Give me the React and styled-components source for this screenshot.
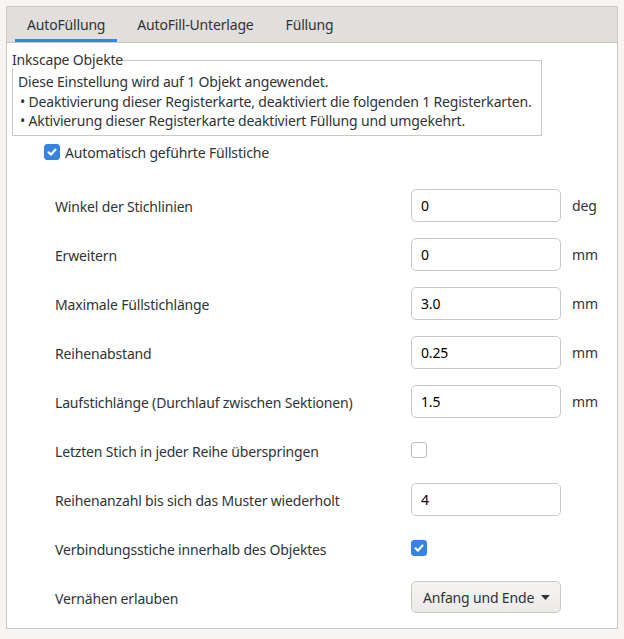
import React from 'react';
import styled, { createGlobalStyle } from 'styled-components';

const GlobalStyle = createGlobalStyle`
  html, body {
    margin: 0;
    padding: 0;
    background: #f6f5f4;
    font-family: "Noto Sans", "DejaVu Sans", sans-serif;
    font-size: 14px;
    letter-spacing: -0.17px;
    color: #2e3436;
  }
`;

const Window = styled.div`
  width: 624px;
  height: 639px;
  box-sizing: border-box;
  padding: 6px 6px 10px 6px;
  background: #f6f5f4;
`;

const Notebook = styled.div`
  border: 1px solid #cdc7c2;
  background: #ffffff;
  height: 100%;
  box-sizing: border-box;
  display: flex;
  flex-direction: column;
`;

const TabBar = styled.div`
  flex-shrink: 0;
  display: flex;
  background: #e1dedb;
  border-bottom: 1px solid #cdc7c2;
  height: 36px;
  box-sizing: border-box;
  padding-left: 8px;
`;

const Tab = styled.div`
  padding: 0 12px;
  display: flex;
  align-items: center;
  margin-right: 8px;
  color: #2e3436;
  box-shadow: ${p => (p.active ? 'inset 0 -3px 0 #3584e4' : 'none')};
`;

const Page = styled.div`
  padding: 5px 5px 0 5px;
`;

const Group = styled.fieldset`
  margin: 4px 70px 0 0;
  padding: 4px 6px 4px 5px;
  border: 1px solid #cdc7c2;
  line-height: 19.5px;
`;

const Legend = styled.legend`
  padding: 0;
  margin-left: -6px;
  line-height: 16px;
`;

const Line = styled.div`
  padding-left: ${p => (p.bullet ? '2px' : '0')};
  white-space: nowrap;
`;

const CheckRow = styled.label`
  display: flex;
  align-items: center;
  gap: 5px;
  margin: 7px 0 0 32px;
`;

const Box = styled.span`
  width: 16px;
  height: 16px;
  border-radius: 3px;
  box-sizing: border-box;
  display: inline-flex;
  align-items: center;
  justify-content: center;
  background: ${p => (p.checked ? '#3584e4' : '#ffffff')};
  border: 1px solid ${p => (p.checked ? '#3584e4' : '#c0bbb6')};
`;

const Form = styled.div`
  display: grid;
  grid-template-columns: 345px 150px auto;
  grid-auto-rows: 49px;
  align-items: center;
  column-gap: 11px;
  margin: 19px 0 0 43px;
`;

const Label = styled.div`
  padding-top: 2px;
  white-space: nowrap;
`;

const Field = styled.div`
  width: 100%;
  height: 33px;
  box-sizing: border-box;
  border: 1px solid #cdc7c2;
  border-radius: 5px;
  padding: 0 9px;
  display: flex;
  align-items: center;
  color: #000;
`;

const Unit = styled.div`
  color: #2e3436;
`;

const Cell = styled.div`
  display: flex;
  align-items: center;
`;

const Combo = styled.div`
  width: 100%;
  height: 32px;
  box-sizing: border-box;
  border: 1px solid #cdc7c2;
  border-radius: 5px;
  background: linear-gradient(#f4f3f2, #ecebea);
  display: flex;
  align-items: center;
  padding: 0 10px 0 11px;
  gap: 7px;
  white-space: nowrap;
`;

const Check = ({ checked }) => (
  <Box checked={checked}>
    {checked && (
      <svg width="12" height="12" viewBox="0 0 12 12">
        <path d="M2.5 6.3 L5 8.6 L9.5 3.6" stroke="#fff" strokeWidth="2.2" strokeLinecap="round" strokeLinejoin="round" fill="none" />
      </svg>
    )}
  </Box>
);

const rows = [
  { label: 'Winkel der Stichlinien', value: '0', unit: 'deg' },
  { label: 'Erweitern', value: '0', unit: 'mm' },
  { label: 'Maximale Füllstichlänge', value: '3.0', unit: 'mm' },
  { label: 'Reihenabstand', value: '0.25', unit: 'mm' },
  { label: 'Laufstichlänge (Durchlauf zwischen Sektionen)', value: '1.5', unit: 'mm' },
  { label: 'Letzten Stich in jeder Reihe überspringen', check: false },
  { label: 'Reihenanzahl bis sich das Muster wiederholt', value: '4' },
  { label: 'Verbindungsstiche innerhalb des Objektes', check: true },
  { label: 'Vernähen erlauben', combo: 'Anfang und Ende' },
];

export default function App() {
  return (
    <>
      <GlobalStyle />
      <Window>
        <Notebook>
          <TabBar>
            <Tab active>AutoFüllung</Tab>
            <Tab>AutoFill-Unterlage</Tab>
            <Tab>Füllung</Tab>
          </TabBar>
          <Page>
            <Group>
              <Legend>Inkscape Objekte</Legend>
              <Line>Diese Einstellung wird auf 1 Objekt angewendet.</Line>
              <Line bullet>• Deaktivierung dieser Registerkarte, deaktiviert die folgenden 1 Registerkarten.</Line>
              <Line bullet>• Aktivierung dieser Registerkarte deaktiviert Füllung und umgekehrt.</Line>
            </Group>
            <CheckRow>
              <Check checked />
              Automatisch geführte Füllstiche
            </CheckRow>
            <Form>
              {rows.map((r, i) => (
                <React.Fragment key={i}>
                  <Label>{r.label}</Label>
                  <Cell>
                    {r.value !== undefined && <Field>{r.value}</Field>}
                    {r.check !== undefined && <Check checked={r.check} />}
                    {r.combo && (
                      <Combo>
                        {r.combo}
                        <svg width="12" height="7" viewBox="0 0 12 7">
                          <path d="M0 0 H12 L6 7 Z" fill="#2e3436" />
                        </svg>
                      </Combo>
                    )}
                  </Cell>
                  <Unit>{r.unit || ''}</Unit>
                </React.Fragment>
              ))}
            </Form>
          </Page>
        </Notebook>
      </Window>
    </>
  );
}
